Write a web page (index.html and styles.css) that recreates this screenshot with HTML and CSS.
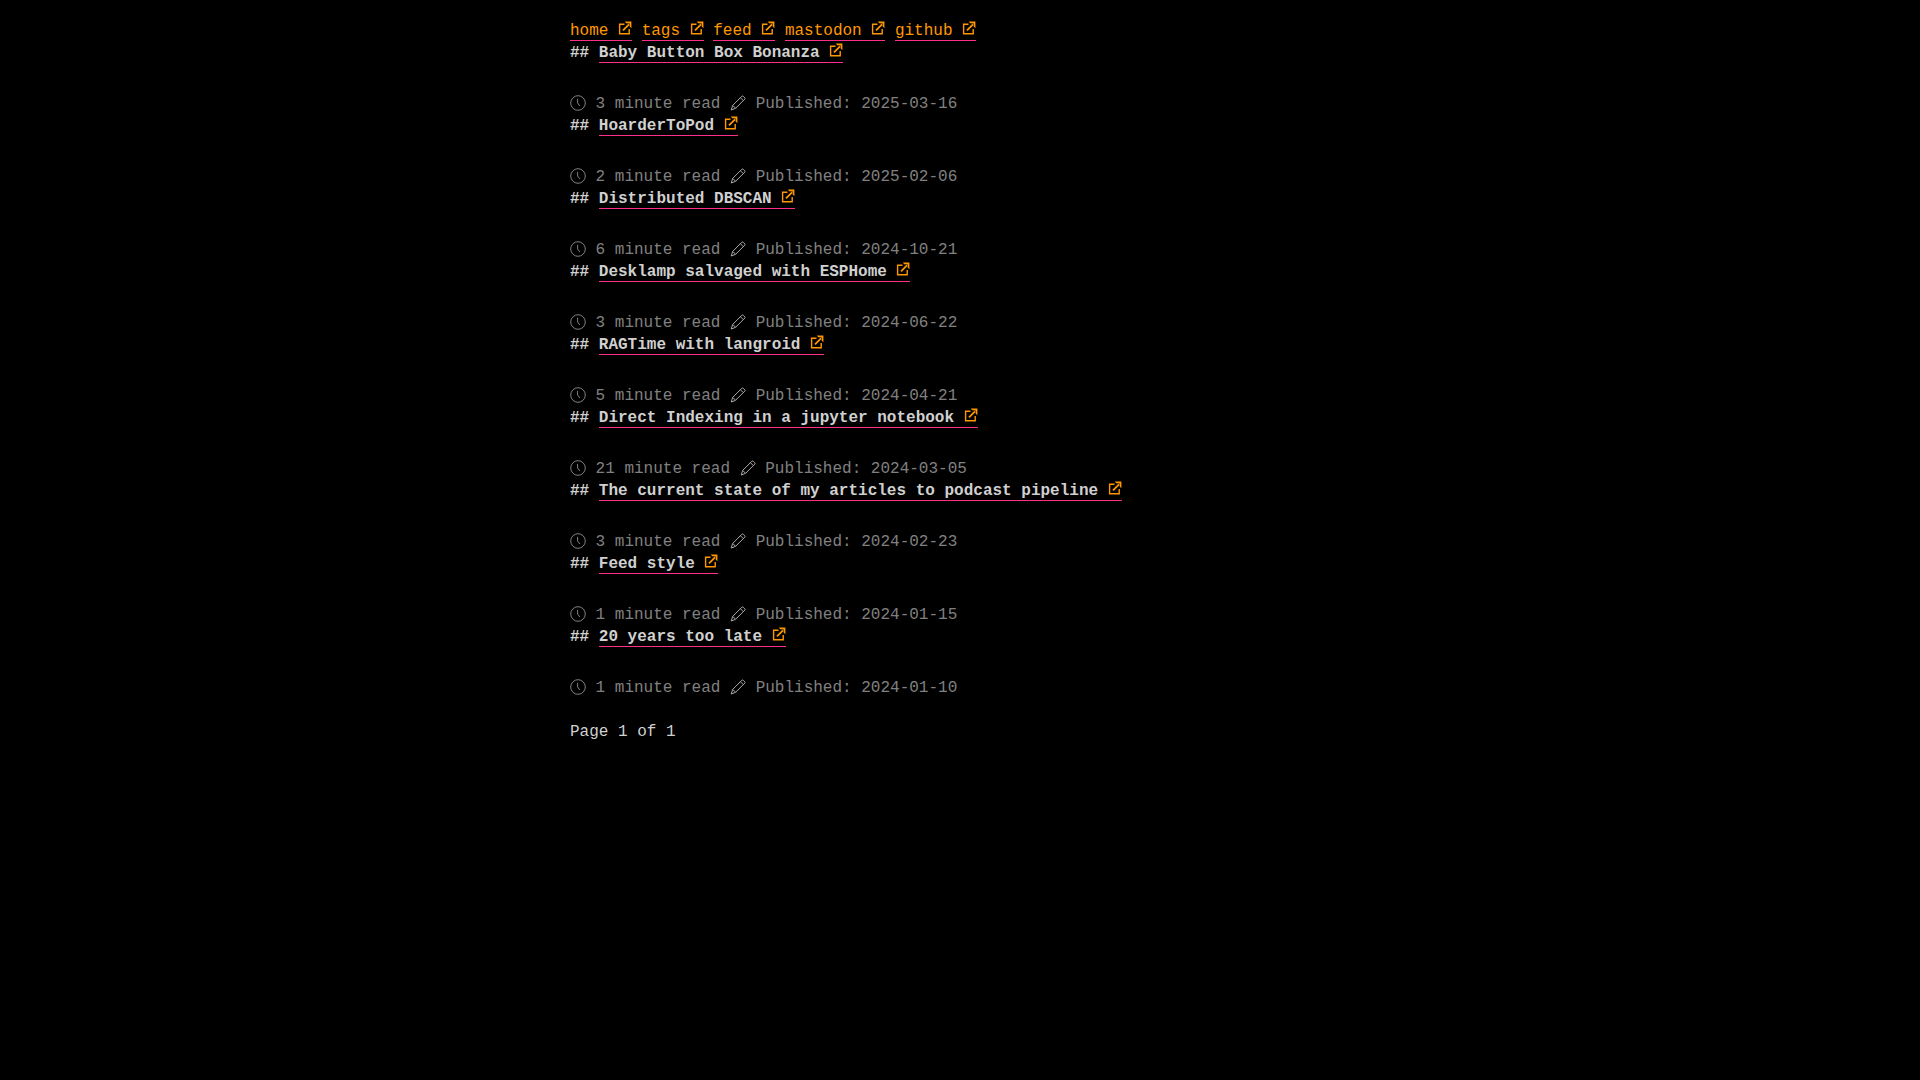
FILE: index.html
```
<!DOCTYPE html>
<html lang="en">
<head>
  <meta charset="utf-8">
  <meta name="viewport" content="width=device-width, initial-scale=1">
  <title>home</title>
  <link rel="stylesheet" href="styles.css">
</head>
<body>
  <!-- icon sprite -->
  <svg class="sprite" aria-hidden="true">
    <symbol id="ext" viewBox="0 0 14 14">
      <path d="M6.5 3.2H1.6v9.5h9.6V8" fill="none" stroke="currentColor" stroke-width="1.4"/>
      <path d="M5 9.4l6-6" fill="none" stroke="currentColor" stroke-width="1.8"/>
      <path d="M6.8 .6H13.4V7.2L11.7 5.6V2.6L8.2 2.2z" fill="currentColor"/>
    </symbol>
    <symbol id="clock" viewBox="0 0 16 16">
      <circle cx="8" cy="8" r="7.3" fill="none" stroke="currentColor" stroke-width="1"/>
      <path d="M7.6 3.8V8l2.2 3" fill="none" stroke="currentColor" stroke-width="1"/>
    </symbol>
    <symbol id="pencil" viewBox="0 0 16 16">
      <path d="M1.2 15l1.5-4.6L11.9 1.2q.6-.5 1.2 0l1.7 1.7q.5.6 0 1.2L5.6 13.3zM2.7 10.4l2.9 2.9M10.4 2.7l2.9 2.9" fill="none" stroke="currentColor" stroke-width="1" stroke-linejoin="round"/>
    </symbol>
  </svg>

  <nav>
    <a href="#">home <svg class="ext"><use href="#ext"/></svg></a>
    <a href="#">tags <svg class="ext"><use href="#ext"/></svg></a>
    <a href="#">feed <svg class="ext"><use href="#ext"/></svg></a>
    <a href="#">mastodon <svg class="ext"><use href="#ext"/></svg></a>
    <a href="#">github <svg class="ext"><use href="#ext"/></svg></a>
  </nav>

  <main>
    <article>
      <h2>## <a href="#">Baby Button Box Bonanza <svg class="ext"><use href="#ext"/></svg></a></h2>
      <p class="meta"><svg class="icon"><use href="#clock"/></svg> 3 minute read <svg class="icon pencil"><use href="#pencil"/></svg> Published: 2025-03-16</p>
    </article>
    <article>
      <h2>## <a href="#">HoarderToPod <svg class="ext"><use href="#ext"/></svg></a></h2>
      <p class="meta"><svg class="icon"><use href="#clock"/></svg> 2 minute read <svg class="icon pencil"><use href="#pencil"/></svg> Published: 2025-02-06</p>
    </article>
    <article>
      <h2>## <a href="#">Distributed DBSCAN <svg class="ext"><use href="#ext"/></svg></a></h2>
      <p class="meta"><svg class="icon"><use href="#clock"/></svg> 6 minute read <svg class="icon pencil"><use href="#pencil"/></svg> Published: 2024-10-21</p>
    </article>
    <article>
      <h2>## <a href="#">Desklamp salvaged with ESPHome <svg class="ext"><use href="#ext"/></svg></a></h2>
      <p class="meta"><svg class="icon"><use href="#clock"/></svg> 3 minute read <svg class="icon pencil"><use href="#pencil"/></svg> Published: 2024-06-22</p>
    </article>
    <article>
      <h2>## <a href="#">RAGTime with langroid <svg class="ext"><use href="#ext"/></svg></a></h2>
      <p class="meta"><svg class="icon"><use href="#clock"/></svg> 5 minute read <svg class="icon pencil"><use href="#pencil"/></svg> Published: 2024-04-21</p>
    </article>
    <article>
      <h2>## <a href="#">Direct Indexing in a jupyter notebook <svg class="ext"><use href="#ext"/></svg></a></h2>
      <p class="meta"><svg class="icon"><use href="#clock"/></svg> 21 minute read <svg class="icon pencil"><use href="#pencil"/></svg> Published: 2024-03-05</p>
    </article>
    <article>
      <h2>## <a href="#">The current state of my articles to podcast pipeline <svg class="ext"><use href="#ext"/></svg></a></h2>
      <p class="meta"><svg class="icon"><use href="#clock"/></svg> 3 minute read <svg class="icon pencil"><use href="#pencil"/></svg> Published: 2024-02-23</p>
    </article>
    <article>
      <h2>## <a href="#">Feed style <svg class="ext"><use href="#ext"/></svg></a></h2>
      <p class="meta"><svg class="icon"><use href="#clock"/></svg> 1 minute read <svg class="icon pencil"><use href="#pencil"/></svg> Published: 2024-01-15</p>
    </article>
    <article>
      <h2>## <a href="#">20 years too late <svg class="ext"><use href="#ext"/></svg></a></h2>
      <p class="meta"><svg class="icon"><use href="#clock"/></svg> 1 minute read <svg class="icon pencil"><use href="#pencil"/></svg> Published: 2024-01-10</p>
    </article>
    <p class="pages">Page 1 of 1</p>
  </main>
</body>
</html>
```
FILE: styles.css
```
body {
  max-width: 780px;
  margin: 0 auto;
  padding: 20px;
  background: #000;
  color: #d0d0d0;
  font-family: "Liberation Mono", monospace;
  font-size: 16px;
  line-height: 22px;
}

.sprite {
  display: none;
}

a {
  color: #ff9800;
  text-decoration: none;
  border-bottom: 1px solid #ff2e88;
}

h2 {
  margin: 0;
  font-size: 16px;
}

h2 a {
  color: inherit;
}

.ext {
  width: 14px;
  height: 14px;
  color: #ff9800;
}

.icon {
  width: 16px;
  height: 16px;
  vertical-align: -3px;
}

.pencil {
  color: #aaa;
}

.meta {
  margin: 29px 0 0;
  color: #808080;
}

.pages {
  margin: 22px 0;
}
```
